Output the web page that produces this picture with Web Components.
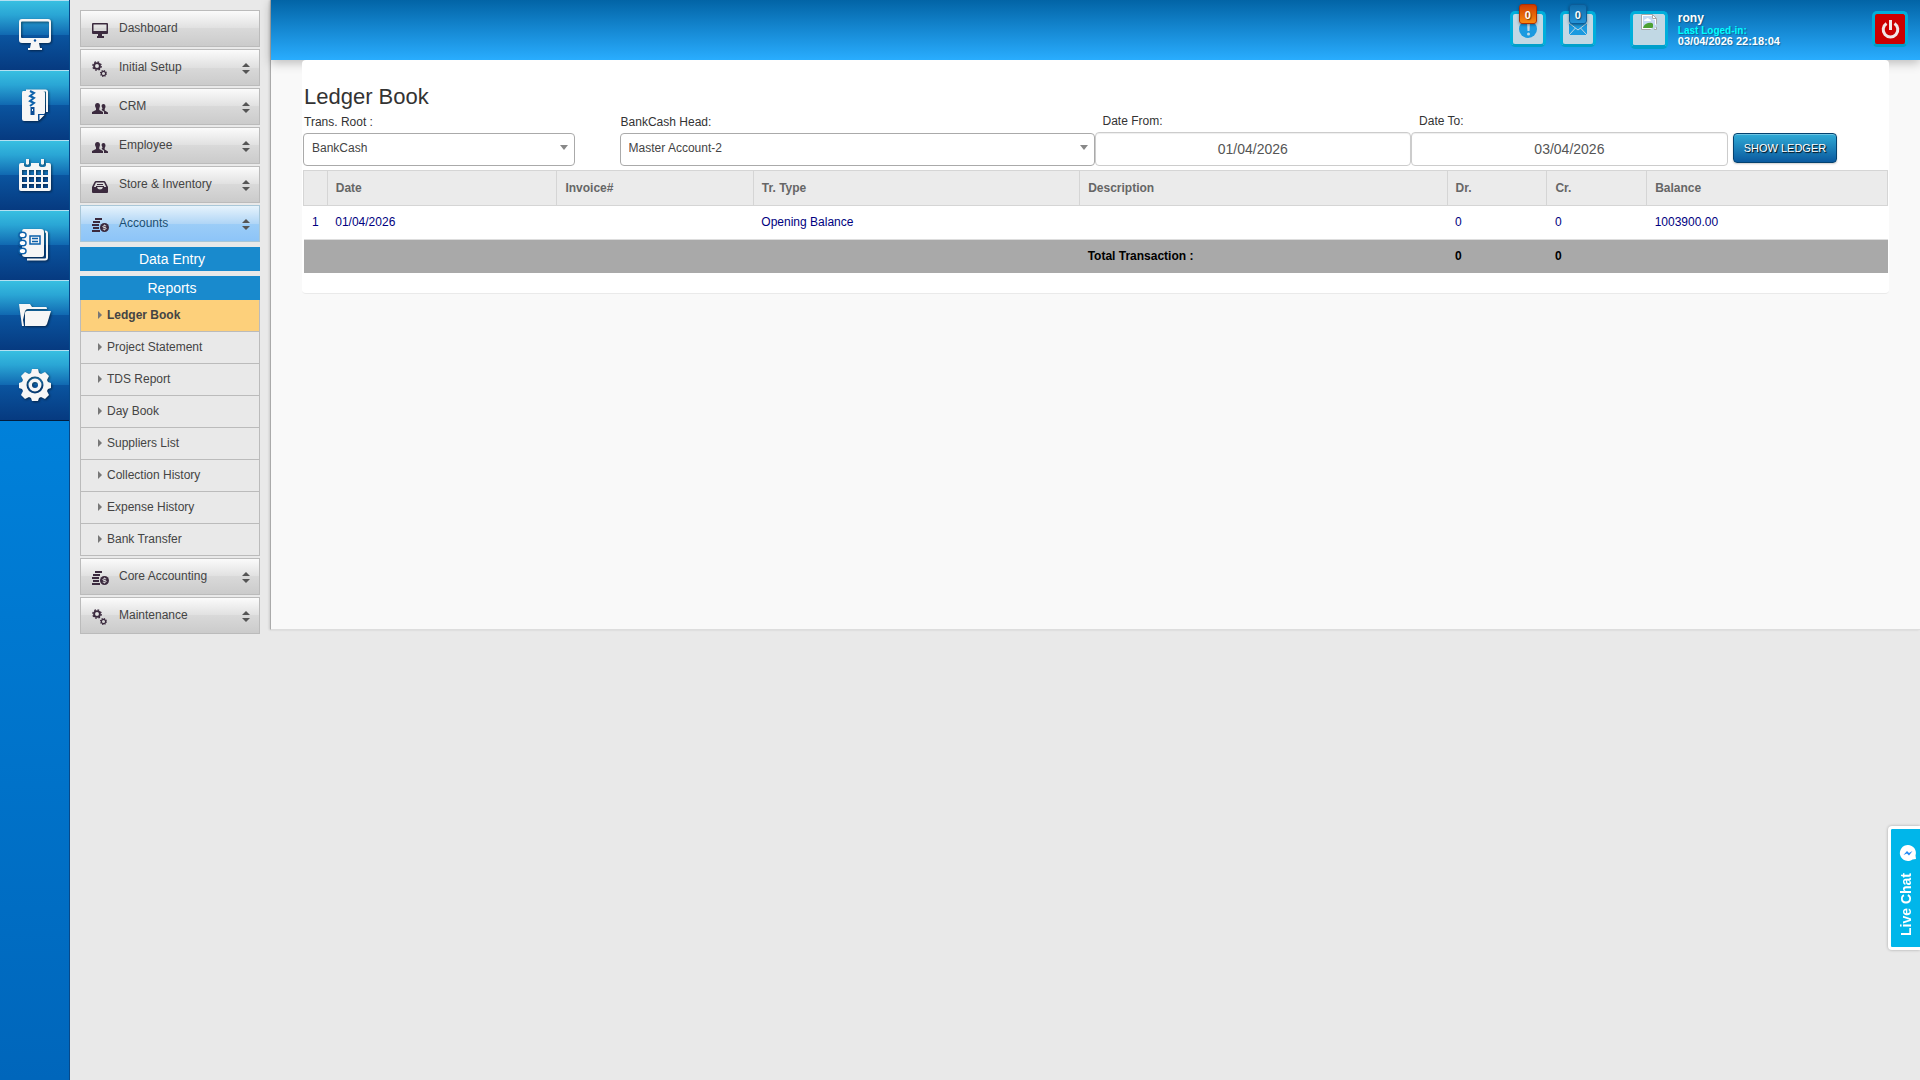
<!DOCTYPE html>
<html lang="en">
<head>
<meta charset="utf-8">
<title>Ledger Book</title>
<style>
  html, body { margin: 0; min-height: 100%; }
  body {
    background: #e9e9e9;
    color: #333;
    font-family: "Liberation Sans", Arial, sans-serif;
    font-size: 12px;
  }
</style>
</head>
<body>
<ledger-app></ledger-app>

<script>
const ICONS = {
  // shortcut rail, 32x32
  monitor: `<path fill-rule="evenodd" d="M3 0h26q3 0 3 3v18q0 3-3 3H3q-3 0-3-3V3q0-3 3-3zM3 2.500q-1 0-1 1V18q0 1 1 1h26q1 0 1-1V3.500q0-1-1-1z"/><path d="M12 24h8l1 5h2v2H9v-2h2z"/><circle cx="16" cy="21.500" r="1.200" fill="#0b529f"/>`,
  archive: `<path d="M7 1.500h19.500q1.500 0 1.500 1.500v20" fill="none" stroke="#f6f6f6" stroke-width="2"/><path d="M4 2h20q2 0 2 2v20l-7 8H5q-2 0-2-2V4q0-2 1-2z"/><path d="M19 32v-7h7z" fill="#0a4c96"/><path d="M20.500 31v-5h5z"/><path d="M11 2l4 2-4 3 4 2-4 3 4 2-4 3" fill="none" stroke="#0d62ab" stroke-width="2"/><path d="M11.500 18h4v8h-4z" fill="#0a4c96"/><path d="M13 20h1v2h-1z"/>`,
  calendar: `<path fill-rule="evenodd" d="M2 4h3v2q0 2 3.500 2T12 6V4h8v2q0 2 3.500 2T27 6V4h3q2 0 2 2v24q0 2-2 2H2q-2 0-2-2V6q0-2 2-2zM3 11v5h5v-5zM10 11v5h5v-5zM17 11v5h5v-5zM24 11v5h5v-5zM3 18v5h5v-5zM10 18v5h5v-5zM17 18v5h5v-5zM24 18v5h5v-5zM3 25v4h5v-4zM10 25v4h5v-4zM17 25v4h5v-4zM24 25v4h5v-4z"/><path d="M7 0h3v5q-1.500 1.500-3 0zM22 0h3v5q-1.500 1.500-3 0z"/>`,
  notebook: `<path d="M26 2.500q2 0 2 2v24q0 2-2 2H8" fill="none" stroke="#f6f6f6" stroke-width="2"/><path d="M5 0h17q3 0 3 3v23q0 2-2 2H6q-3 0-3-3V3q0-3 2-3z"/><g fill="#fff" stroke="#0b60aa" stroke-width="1.500"><ellipse cx="3.500" cy="6" rx="3.500" ry="2.800"/><ellipse cx="3.500" cy="14" rx="3.500" ry="2.800"/><ellipse cx="3.500" cy="22" rx="3.500" ry="2.800"/></g><path d="M11 7h10v8H11zM13 9.500h6M13 12.500h6" fill="none" stroke="#0b60aa" stroke-width="1.500"/>`,
  folder: `<path d="M0 5h11l2 3h14q1 0 1 2H9q-2 0-3 2l-2 9 1 6H3z"/><path d="M8 12h24l-4 13q-1 2-2 2H6V14q0-2 2-2z"/>`,
  gear: `<path fill-rule="evenodd" d="M13 0h6l1 4 2 1 4-2 4 4-2 4 1 2 3 1v5l-3 1-1 2 2 4-4 4-4-2-2 1-1 3h-6l-1-3-2-1-4 2-4-4 2-4-1-2-3-1v-5l3-1 1-2-2-4 4-4 4 2 2-1zM16 7.500a8.500 8.500 0 1 0 0 17 8.500 8.500 0 0 0 0-17z"/><path fill-rule="evenodd" d="M16 9.500a6.500 6.500 0 1 0 0 13 6.500 6.500 0 0 0 0-13zm0 3.500a3 3 0 1 1 0 6 3 3 0 0 1 0-6z"/>`,
  // side menu, 16x16
  desktop: `<path fill-rule="evenodd" d="M1 1h14v11H1q-1 0-1-1V2q0-1 1-1zM1.500 2.500V9h13V2.500z"/><path d="M15 1q1 0 1 1v9q0 1-1 1zM6 12h4v2h2v2H5v-2h1z"/>`,
  gears: `<g fill="none" stroke="currentColor"><circle cx="5" cy="5" r="2.900" stroke-width="1.900"/><circle cx="5" cy="5" r="4.200" stroke-width="1.300" stroke-dasharray="1.700 1.600"/><circle cx="11.500" cy="12.500" r="2.100" stroke-width="1.100"/><circle cx="11.500" cy="12.500" r="3" stroke-width="1.100" stroke-dasharray="1.200 1.156"/></g>`,
  people: `<path d="M5.500 3Q8 3 8 6L7.300 8.500v1.500L11 12v2H0v-2l4-2V8.500L3 6q0-3 2.500-3z"/><path d="M11.500 4q2 0 2 3l-.8 2v1.500L16 12.500V14h-4v-2.500l-2.500-1.500 1-1.500-1-2.500q0-2 2-2z"/>`,
  inbox: `<path fill-rule="evenodd" d="M4 3h8q1 0 1.500 1L16 9v5q0 1-1 1H1q-1 0-1-1V9l2.500-5Q3 3 4 3zm0 1.500L1.800 9H5q.5 2.500 3 2.500T11 9h3.200L12 4.500z"/><path d="M5 6h6v1H5zM4 8h8v1H4z"/>`,
  coins: `<path d="M3 1h7v2H3zM1 4h7v2H1zM0 7h7v2H0zM1 10h6v2H1zM0 13h8v2H0z"/><circle cx="12.500" cy="10.500" r="4.500"/><path d="M14.200 8.800h-2.300q-1 0-1 .8t1 .9h1.200q1 0 1 .9t-1 .8h-2.300M12.500 7.600v1M12.500 12.400v1" fill="none" stroke="#eee" stroke-width=".9"/>`,
  sorter: `<path d="M4 0l4 4H0zM4 11L0 7h8z"/>`,
  caret: `<path d="M0 0l4 4-4 4z"/>`,
  drop: `<path d="M0 0h8L4 5z"/>`,
  // header
  alert: `<circle cx="9" cy="9" r="9"/><path d="M8 2h3l-.5 9h-2z" fill="#c1d8e4"/><circle cx="9.500" cy="14" r="1.500" fill="#c1d8e4"/>`,
  mail: `<path d="M0 0h18v12H0z"/><path d="M0 0l9 7 9-7M0 12l6.500-7M18 12l-6.500-7" fill="none" stroke="#c1d8e4" stroke-width="1"/>`,
  power: `<path d="M5.500 3.500a7.300 7.300 0 1 0 8 0" fill="none" stroke="#f2e6e6" stroke-width="3"/><path d="M8 0h3v10H8z"/>`,
  broken: `<path d="M.5.500h11l4 4v11H.500z" fill="#fff" stroke="#a9a9a9"/><path d="M2 2h9v3l3 1v8H2z" fill="#c6d9f2"/><path d="M3 7q0-2 2-2 2-2 3 0 2 0 2 2z" fill="#fff"/><path d="M2 14q1-4 5-5 4-1 5 1v4z" fill="#4da133"/><path d="M17 8.500L8 17h3.500L17 11.500z" fill="#c1d8e4"/><path d="M11.500.500v4h4z" fill="#fff" stroke="#a9a9a9"/>`,
  chat: `<path d="M8 0a8 8 0 0 1 7.500 10.500L16 14l-3.500.500A8 8 0 1 1 8 0z"/><path d="M3.500 10L7 6l2 2 3.500-2L9 10.500 7 8.500z" fill="#1e88f5"/>`
};

/** Draws one entry of ICONS; `box` is its viewBox size. */
class AppIcon extends HTMLElement {
  constructor() {
    super();
    this.attachShadow({ mode: 'open' });
  }

  connectedCallback() {
    const [w, h] = (this.getAttribute('box') || '16 16').split(' ');
    this.shadowRoot.innerHTML = `
      <style>
        :host { display: block; flex: none; width: ${w}px; height: ${h}px; }
        svg { display: block; fill: currentColor; overflow: visible; }
      </style>
      <svg width="${w}" height="${h}" viewBox="0 0 ${w} ${h}" aria-hidden="true">${ICONS[this.getAttribute('name')] || ''}</svg>`;
  }
}

class RailLink extends HTMLElement {
  constructor() {
    super();
    this.attachShadow({ mode: 'open' });
    this.shadowRoot.innerHTML = `
      <style>
        :host { display: block; }
        a {
          box-sizing: border-box;
          display: grid;
          place-items: center;
          height: 70px;
          padding-bottom: 2px;
          border-top: 1px solid #b4e0f2;
          background: linear-gradient(#38bfe1 0%, #2aa6d5 20%, #1067b0 50%, #0a549f 50%, #063a80 100%);
          color: #f6f6f6;
        }
        app-icon { filter: drop-shadow(1px 1px 1px rgba(0,0,0,0.5)); }
      </style>
      <a href="#" aria-label="${this.getAttribute('label')}"><app-icon name="${this.getAttribute('icon')}" box="32 32"></app-icon></a>`;
  }
}

class IconRail extends HTMLElement {
  constructor() {
    super();
    this.attachShadow({ mode: 'open' });
    this.shadowRoot.innerHTML = `
      <style>
        :host {
          box-sizing: border-box;
          display: block;
          flex: none;
          width: 70px;
          border-right: 1px solid #06498a;
          background: linear-gradient(#0092ee, #0066bb);
        }
        nav { border-bottom: 1px solid #021c3c; }
      </style>
      <nav aria-label="Shortcuts"><slot></slot></nav>`;
  }
}

class MenuItem extends HTMLElement {
  constructor() {
    super();
    this.attachShadow({ mode: 'open' });
    const sorter = this.hasAttribute('plain') ? '' : '<app-icon class="sorter" name="sorter" box="8 11"></app-icon>';
    this.shadowRoot.innerHTML = `
      <style>
        :host { display: block; margin-bottom: 2px; }
        a {
          box-sizing: border-box;
          display: flex;
          align-items: center;
          height: 37px;
          padding: 0 9px 0 11px;
          border: 1px solid #bbb;
          background: linear-gradient(#fbfbfb, #e0e0e0 50%, #d9d9d9 50%, #cbcbcb);
          color: #444;
          text-decoration: none;
        }
        :host([active]) a {
          border-color: #a9c7d8;
          background: linear-gradient(#e6f3fc, #b1d6f6 50%, #9ccdf7 50%, #8dc4f8);
          color: #1b4f72;
        }
        app-icon { color: #3b2a3e; padding-top: 2px; }
        .label { flex: 1; margin-left: 11px; padding-bottom: 2px; }
        .sorter { color: #555; }
      </style>
      <a href="#"><app-icon name="${this.getAttribute('icon')}"></app-icon><span class="label"><slot></slot></span>${sorter}</a>`;
  }
}

class MenuHeading extends HTMLElement {
  constructor() {
    super();
    this.attachShadow({ mode: 'open' });
    this.shadowRoot.innerHTML = `
      <style>
        :host {
          display: block;
          margin-top: 5px;
          padding-left: 4px;
          background: #198acd;
          color: #fff;
          font-size: 14px;
          line-height: 24px;
          text-align: center;
        }
      </style>
      <slot></slot>`;
  }
}

class SubLink extends HTMLElement {
  constructor() {
    super();
    this.attachShadow({ mode: 'open' });
    this.shadowRoot.innerHTML = `
      <style>
        :host { display: block; }
        a {
          box-sizing: border-box;
          display: flex;
          align-items: center;
          gap: 5px;
          height: 32px;
          padding: 0 17px 2px;
          border: solid #bbb;
          border-width: 0 1px 1px;
          color: #444;
          text-decoration: none;
        }
        app-icon { color: #777; }
        :host([active]) a { background: #fdd07b; font-weight: bold; }
      </style>
      <a href="#"><app-icon name="caret" box="4 8"></app-icon><span><slot></slot></span></a>`;
  }
}

class SideMenu extends HTMLElement {
  constructor() {
    super();
    this.attachShadow({ mode: 'open' });
    this.shadowRoot.innerHTML = `
      <style>
        :host { display: block; flex: none; width: 180px; padding: 10px; }
        .sub { margin-bottom: 2px; }
      </style>
      <nav aria-label="Main menu">
        <menu-item icon="desktop" plain>Dashboard</menu-item>
        <menu-item icon="gears">Initial Setup</menu-item>
        <menu-item icon="people">CRM</menu-item>
        <menu-item icon="people">Employee</menu-item>
        <menu-item icon="inbox">Store &amp; Inventory</menu-item>
        <menu-item icon="coins" active>Accounts</menu-item>
        <div class="sub">
          <menu-heading>Data Entry</menu-heading>
          <menu-heading>Reports</menu-heading>
          <sub-link active>Ledger Book</sub-link>
          <sub-link>Project Statement</sub-link>
          <sub-link>TDS Report</sub-link>
          <sub-link>Day Book</sub-link>
          <sub-link>Suppliers List</sub-link>
          <sub-link>Collection History</sub-link>
          <sub-link>Expense History</sub-link>
          <sub-link>Bank Transfer</sub-link>
        </div>
        <menu-item icon="coins">Core Accounting</menu-item>
        <menu-item icon="gears">Maintenance</menu-item>
      </nav>`;
  }
}

/** Square header button with an optional counter badge. */
class HeaderButton extends HTMLElement {
  constructor() {
    super();
    this.attachShadow({ mode: 'open' });
    const count = this.getAttribute('count');
    this.shadowRoot.innerHTML = `
      <style>
        :host { display: block; position: relative; }
        button {
          box-sizing: border-box;
          display: grid;
          place-items: center;
          width: 36px;
          height: 36px;
          padding: 0;
          border: 3px solid #00aedb;
          border-bottom-color: #009fcb;
          border-radius: 5px;
          background: var(--button-bg, #c1d8e4);
          color: var(--button-color, #1b9ae0);
        }
        .badge {
          position: absolute;
          top: -7px;
          left: 9px;
          box-sizing: border-box;
          width: 18px;
          height: 20px;
          border: 1px solid var(--badge-edge, #0b5c98);
          border-radius: 3px;
          background: var(--badge-bg, linear-gradient(#0f6cab, #2493d8));
          box-shadow: 0 1px 3px rgba(0,0,0,0.4);
          color: #fff;
          font-size: 11px;
          font-weight: bold;
          line-height: 20px;
          text-align: center;
          text-shadow: 1px 1px 1px rgba(0,0,0,0.5);
          pointer-events: none;
        }
      </style>
      <button type="button" aria-label="${this.getAttribute('label')}"><slot></slot></button>
      ${count === null ? '' : `<span class="badge">${count}</span>`}`;
  }
}

class TopBar extends HTMLElement {
  constructor() {
    super();
    this.attachShadow({ mode: 'open' });
    this.shadowRoot.innerHTML = `
      <style>
        :host {
          box-sizing: border-box;
          display: flex;
          justify-content: flex-end;
          height: 60px;
          padding: 11px 12px 0;
          background: linear-gradient(#0264a6, #29adff);
          box-shadow: 0 3px 10px rgba(0,0,0,0.25);
        }
        .alerts { --badge-bg: linear-gradient(#d03c00, #f98a10); --badge-edge: #b03000; }
        .mail { margin-left: 14px; }
        .user { display: flex; gap: 10px; margin: 0 92px 0 34px; }
        .avatar {
          box-sizing: border-box;
          display: flex;
          justify-content: center;
          width: 38px;
          height: 38px;
          border: 3px solid #00aedb;
          border-bottom: 4px solid #009fcb;
          border-radius: 5px;
          background: #c1d8e4;
        }
        .who {
          color: #fff;
          font-size: 11px;
          font-weight: bold;
          line-height: 11px;
          text-shadow: 1px 1px 1px rgba(0,0,0,0.3);
        }
        .name { font-size: 12px; line-height: 14px; }
        .since { color: #0ff; font-size: 10px; }
        .power { --button-bg: #c00; --button-color: #f2e6e6; }
      </style>
      <header-button class="alerts" label="Alerts" count="0"><app-icon name="alert" box="18 18"></app-icon></header-button>
      <header-button class="mail" label="Messages" count="0"><app-icon name="mail" box="18 12"></app-icon></header-button>
      <div class="user">
        <div class="avatar"><app-icon name="broken"></app-icon></div>
        <div class="who">
          <div class="name">rony</div>
          <div class="since">Last Loged-in:</div>
          <div>03/04/2026 22:18:04</div>
        </div>
      </div>
      <header-button class="power" label="Log out"><app-icon name="power" box="19 18"></app-icon></header-button>`;
  }
}

class SelectField extends HTMLElement {
  constructor() {
    super();
    this.attachShadow({ mode: 'open' });
    this.shadowRoot.innerHTML = `
      <style>
        :host { display: block; }
        label { display: block; padding: 0 0 4px 1px; line-height: 14px; }
        .box { position: relative; width: var(--field-width, 100%); }
        select {
          appearance: none;
          display: block;
          box-sizing: border-box;
          width: 100%;
          height: 33px;
          padding: 0 24px 4px 8px;
          border: 1px solid #aaa;
          border-radius: 4px;
          background: #fff;
          color: #444;
          font: inherit;
        }
        app-icon { position: absolute; top: 12px; right: 7px; color: #888; pointer-events: none; }
      </style>
      <label for="field">${this.getAttribute('label')}</label>
      <div class="box">
        <select id="field"><option>${this.getAttribute('value')}</option></select>
        <app-icon name="drop" box="8 5"></app-icon>
      </div>`;
  }
}

class DateField extends HTMLElement {
  constructor() {
    super();
    this.attachShadow({ mode: 'open' });
    this.shadowRoot.innerHTML = `
      <style>
        :host { display: block; }
        label { display: block; padding: 0 0 4px 8px; line-height: 14px; }
        input {
          display: block;
          box-sizing: border-box;
          width: 100%;
          height: 34px;
          padding: 0 12px;
          border: 1px solid #ccc;
          border-radius: 4px;
          background: #fff;
          box-shadow: inset 0 1px 1px rgba(0,0,0,0.07);
          color: #555;
          font: inherit;
          font-size: 14px;
          text-align: center;
        }
      </style>
      <label for="field">${this.getAttribute('label')}</label>
      <input id="field" type="text" value="${this.getAttribute('value')}">`;
  }
}

class LedgerFilter extends HTMLElement {
  constructor() {
    super();
    this.attachShadow({ mode: 'open' });
    this.shadowRoot.innerHTML = `
      <style>
        form { display: grid; grid-template-columns: 2fr 3fr 2fr 2fr 1fr; align-items: end; padding-right: 2px; }
        .root { --field-width: 86%; }
        button {
          align-self: end;
          justify-self: start;
          height: 30px;
          margin: 0 0 3px 5px;
          padding: 0 10px;
          border: 1px solid #04426f;
          border-radius: 4px;
          background: linear-gradient(#30abd6, #0a5a9f);
          box-shadow: inset 0 1px 0 rgba(255,255,255,0.3), 0 1px 2px rgba(0,0,0,0.2);
          color: #fff;
          font: inherit;
          font-size: 11px;
          text-shadow: 1px 1px 1px #000;
          white-space: nowrap;
        }
      </style>
      <form>
        <select-field class="root" label="Trans. Root :" value="BankCash"></select-field>
        <select-field label="BankCash Head:" value="Master Account-2"></select-field>
        <date-field label="Date From:" value="01/04/2026"></date-field>
        <date-field label="Date To:" value="03/04/2026"></date-field>
        <button type="button">SHOW LEDGER</button>
      </form>`;
  }
}

class LedgerTable extends HTMLElement {
  constructor() {
    super();
    this.attachShadow({ mode: 'open' });
    this.shadowRoot.innerHTML = `
      <style>
        :host { display: block; margin-top: 4px; }
        table { width: 100%; border-collapse: collapse; table-layout: fixed; }
        th, td { height: 32px; padding: 0 8px 1px; text-align: left; }
        thead th { height: 33px; border: 1px solid #d5d5d5; background: #ebebeb; color: #666; }
        tbody td { border-bottom: 1px solid #ddd; color: #000080; }
        tbody td:first-child { text-align: center; padding: 0 4px 1px; }
        tfoot td { background: #a9a9a9; color: #000; font-weight: bold; }
      </style>
      <table>
        <colgroup>
          <col style="width: 1.5%"><col style="width: 14.5%"><col style="width: 12.4%"><col style="width: 20.6%">
          <col style="width: 23.2%"><col style="width: 6.3%"><col style="width: 6.3%"><col>
        </colgroup>
        <thead>
          <tr><th></th><th>Date</th><th>Invoice#</th><th>Tr. Type</th><th>Description</th><th>Dr.</th><th>Cr.</th><th>Balance</th></tr>
        </thead>
        <tbody>
          <tr><td>1</td><td>01/04/2026</td><td></td><td>Opening Balance</td><td></td><td>0</td><td>0</td><td>1003900.00</td></tr>
        </tbody>
        <tfoot>
          <tr><td colspan="4"></td><td>Total Transaction :</td><td>0</td><td>0</td><td></td></tr>
        </tfoot>
      </table>`;
  }
}

class PageCard extends HTMLElement {
  constructor() {
    super();
    this.attachShadow({ mode: 'open' });
    this.shadowRoot.innerHTML = `
      <style>
        :host {
          display: block;
          position: relative;
          margin: 0 31px;
          padding: 24px 1px 20px;
          border-bottom: 1px solid #eaeaea;
          border-radius: 4px;
          background: #fff;
        }
        h1 { margin: 0 0 4px 1px; font-size: 22px; font-weight: normal; line-height: 26px; }
      </style>
      <h1>${this.getAttribute('heading')}</h1>
      <slot></slot>`;
  }
}

class LiveChat extends HTMLElement {
  constructor() {
    super();
    this.attachShadow({ mode: 'open' });
    this.shadowRoot.innerHTML = `
      <style>
        :host { position: fixed; right: 0; bottom: 130px; }
        button {
          display: flex;
          flex-direction: column;
          align-items: center;
          gap: 12px;
          box-sizing: border-box;
          height: 124px;
          width: 32px;
          padding: 16px 0 0 4px;
          border: 3px solid #fff;
          border-right: 0;
          border-radius: 4px 0 0 4px;
          background: #00b6ea;
          box-shadow: 0 0 3px rgba(0,0,0,0.3);
          color: #fff;
          font: bold 14px/16px "Liberation Sans", Arial, sans-serif;
        }
        span { padding-right: 4px; writing-mode: sideways-lr; white-space: nowrap; }
      </style>
      <button type="button"><app-icon name="chat"></app-icon><span>Live Chat</span></button>`;
  }
}

class LedgerApp extends HTMLElement {
  constructor() {
    super();
    this.attachShadow({ mode: 'open' });
    this.shadowRoot.innerHTML = `
      <style>
        :host { display: flex; min-height: 100vh; }
        main {
          flex: 1;
          align-self: flex-start;
          min-width: 0;
          padding-bottom: 335px;
          border-left: 1px solid #aaa;
          border-bottom: 1px solid #ddd;
          background: #f9f9f9;
          box-shadow: -1px 0 2px rgba(0,0,0,0.12);
        }
      </style>
      <icon-rail>
        <rail-link icon="monitor" label="Dashboard"></rail-link>
        <rail-link icon="archive" label="Archive"></rail-link>
        <rail-link icon="calendar" label="Calendar"></rail-link>
        <rail-link icon="notebook" label="Contacts"></rail-link>
        <rail-link icon="folder" label="Files"></rail-link>
        <rail-link icon="gear" label="Settings"></rail-link>
      </icon-rail>
      <side-menu></side-menu>
      <main>
        <top-bar></top-bar>
        <page-card heading="Ledger Book">
          <ledger-filter></ledger-filter>
          <ledger-table></ledger-table>
        </page-card>
      </main>
      <live-chat></live-chat>`;
  }
}

customElements.define('app-icon', AppIcon);
customElements.define('rail-link', RailLink);
customElements.define('icon-rail', IconRail);
customElements.define('menu-item', MenuItem);
customElements.define('menu-heading', MenuHeading);
customElements.define('sub-link', SubLink);
customElements.define('side-menu', SideMenu);
customElements.define('header-button', HeaderButton);
customElements.define('top-bar', TopBar);
customElements.define('select-field', SelectField);
customElements.define('date-field', DateField);
customElements.define('ledger-filter', LedgerFilter);
customElements.define('ledger-table', LedgerTable);
customElements.define('page-card', PageCard);
customElements.define('live-chat', LiveChat);
customElements.define('ledger-app', LedgerApp);
</script>
</body>
</html>
